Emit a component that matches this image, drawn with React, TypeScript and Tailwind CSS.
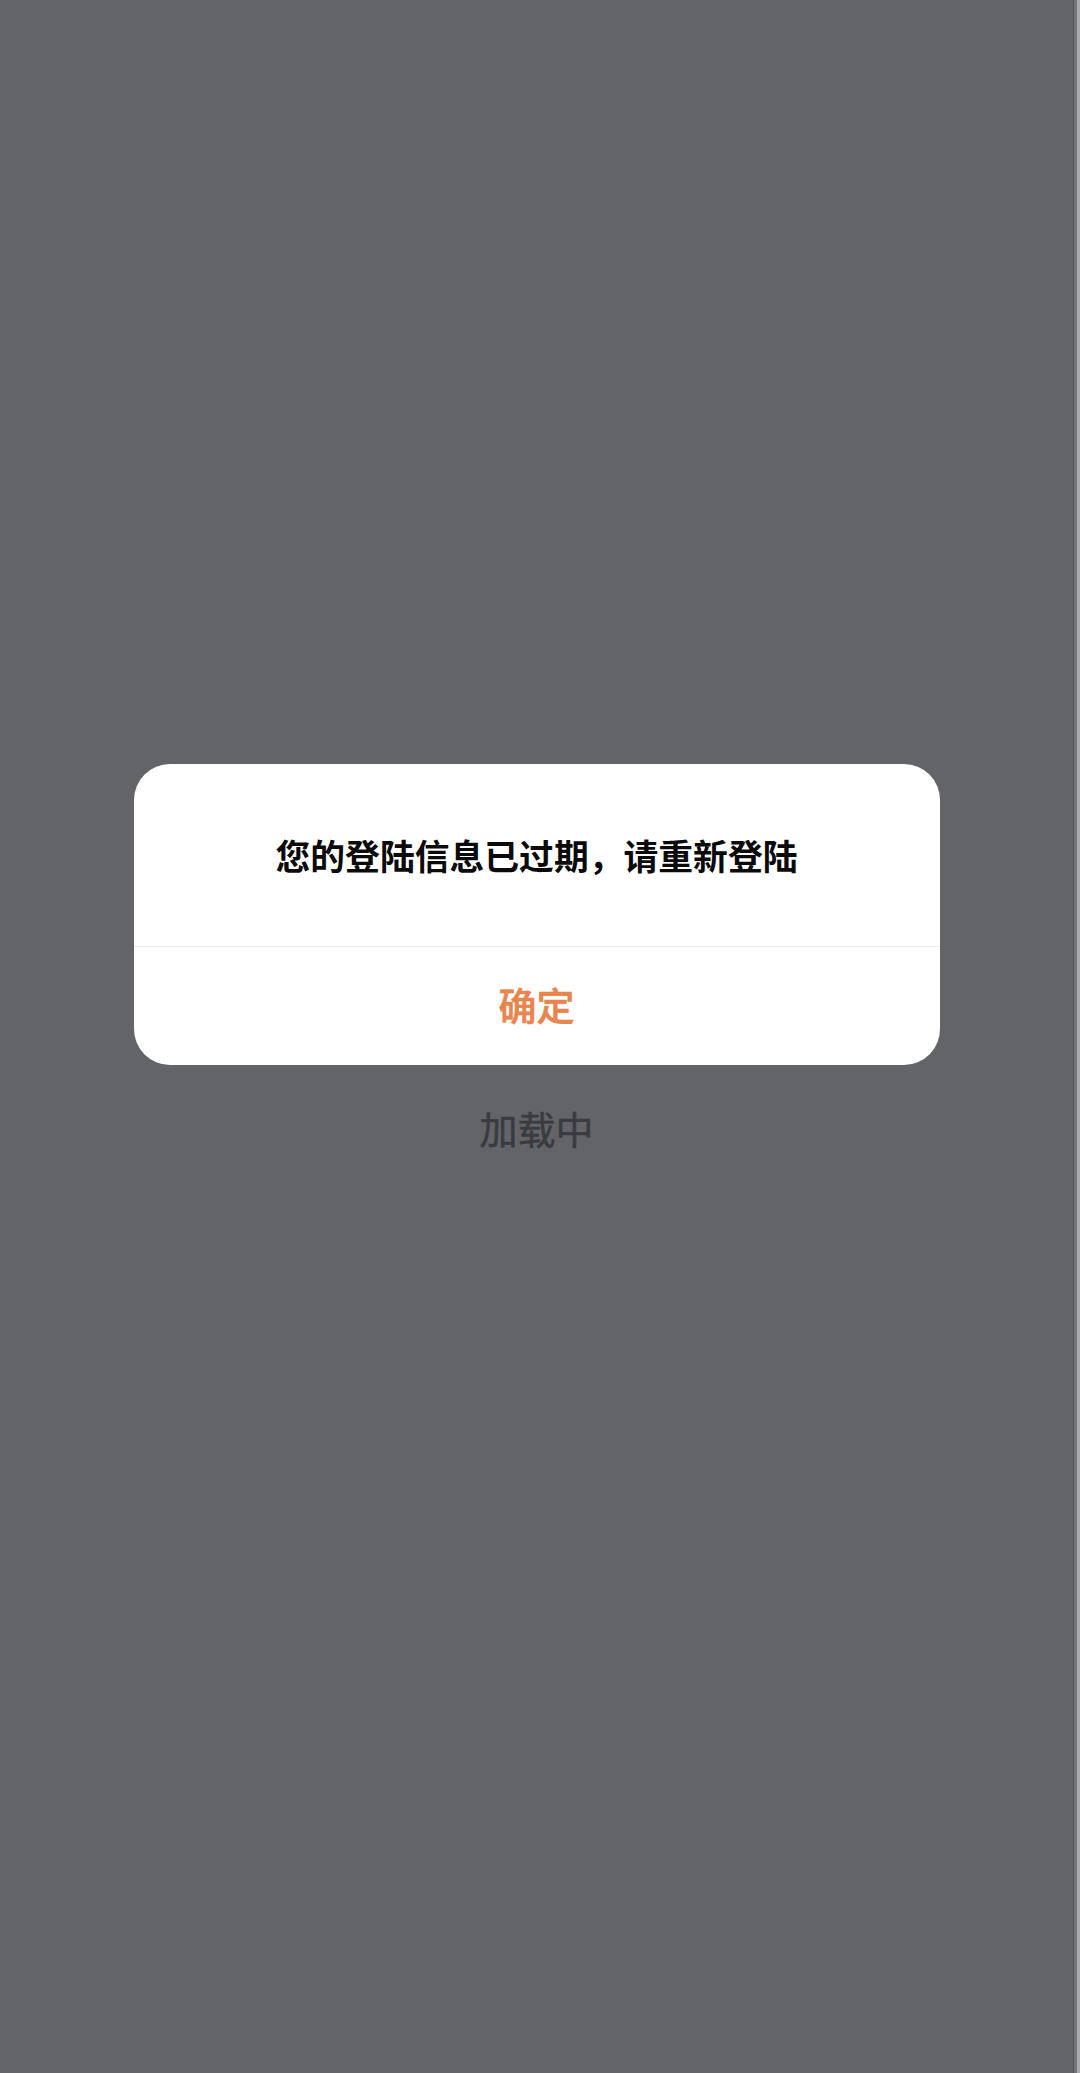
import React from "react";

export default function App() {
  return (
    <div
      className="flex h-[2073px] w-[1080px] bg-[#636468]"
      style={{ fontFamily: '"Noto Sans CJK SC", "Noto Sans", sans-serif' }}
    >
      <div className="flex flex-1 flex-col items-center pt-[764px]">
        <div className="flex w-[806px] flex-col overflow-hidden rounded-[36px] bg-white">
          <div className="flex h-[182px] items-center justify-center">
            <span className="text-[34.8px] font-bold leading-none text-[#0a0a0a]">
              您的登陆信息已过期，请重新登陆
            </span>
          </div>
          <div className="h-px bg-[#ececee]" />
          <div className="flex h-[118px] items-center justify-center pb-[5px]">
            <span className="text-[38px] font-medium leading-none text-[#e8854d] [-webkit-text-stroke:0.6px_#e8854d]">
              确定
            </span>
          </div>
        </div>
        <div className="mt-[36px] text-[38px] leading-[53px] text-[#3a3b3f] [-webkit-text-stroke:0.5px_#3a3b3f]">
          加载中
        </div>
      </div>
      <div className="flex w-[7px] border-l border-[#57585c]">
        <div className="w-[3px] bg-[#747579]" />
        <div className="flex-1 bg-[#a9aaad]" />
      </div>
    </div>
  );
}
